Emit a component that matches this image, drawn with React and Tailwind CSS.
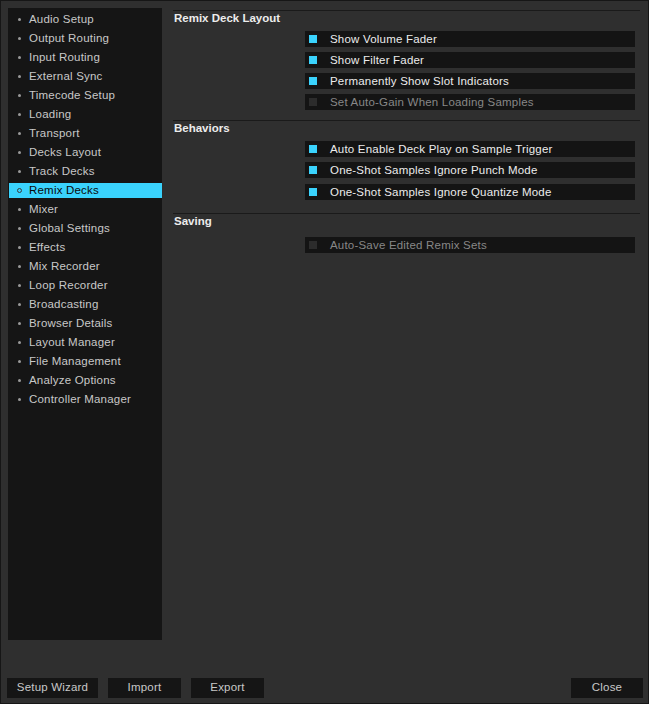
import React from "react";

const NAV = [
  "Audio Setup",
  "Output Routing",
  "Input Routing",
  "External Sync",
  "Timecode Setup",
  "Loading",
  "Transport",
  "Decks Layout",
  "Track Decks",
  "Remix Decks",
  "Mixer",
  "Global Settings",
  "Effects",
  "Mix Recorder",
  "Loop Recorder",
  "Broadcasting",
  "Browser Details",
  "Layout Manager",
  "File Management",
  "Analyze Options",
  "Controller Manager",
];

const SECTIONS = [
  {
    title: "Remix Deck Layout",
    after: "mb-[10px]",
    head: "h-[20px]",
    items: [
      { label: "Show Volume Fader", on: true },
      { label: "Show Filter Fader", on: true },
      { label: "Permanently Show Slot Indicators", on: true },
      { label: "Set Auto-Gain When Loading Samples", on: false },
    ],
  },
  {
    title: "Behaviors",
    after: "mb-[13px]",
    head: "h-[20px]",
    items: [
      { label: "Auto Enable Deck Play on Sample Trigger", on: true },
      { label: "One-Shot Samples Ignore Punch Mode", on: true },
      { label: "One-Shot Samples Ignore Quantize Mode", on: true },
    ],
  },
  {
    title: "Saving",
    after: "",
    head: "h-[23px]",
    items: [{ label: "Auto-Save Edited Remix Sets", on: false }],
  },
];

function Sidebar() {
  return (
    <div className="ml-[7px] mt-[7px] w-[154px] h-[632px] shrink-0 bg-[#151515] pt-[4px] flex flex-col gap-[4px]">
      {NAV.map((name) => {
        const active = name === "Remix Decks";
        return (
          <div
            key={name}
            className={
              "h-[15px] flex items-center ml-[1px] " +
              (active ? "bg-[#3ad3fd] text-[#0a0a0a]" : "text-[#c8c8c8]")
            }
          >
            <div className="w-[20px] flex justify-center">
              {active ? (
                <span className="w-[5px] h-[5px] rounded-full border border-[#3b3b3b]" />
              ) : (
                <span className="w-[3px] h-[3px] rounded-full bg-[#9a9a9a]" />
              )}
            </div>
            <span className="leading-[15px]">{name}</span>
          </div>
        );
      })}
    </div>
  );
}

function Row({ label, on, extra }) {
  return (
    <div
      className={
        "h-[16px] w-[330px] ml-[132px] bg-[#141414] flex items-center " +
        (extra || "")
      }
    >
      <span
        className={
          "ml-[4px] w-[8px] h-[8px] " + (on ? "bg-[#3ad3fd]" : "bg-[#2c2c2c]")
        }
      />
      <span
        className={
          "ml-[13px] leading-[16px] " +
          (on ? "text-[#ececec]" : "text-[#878787]")
        }
      >
        {label}
      </span>
    </div>
  );
}

function Section({ title, items, after, head }) {
  return (
    <div className={after}>
      <div className="h-[1px] bg-[#1a1a1a]" />
      <div className={head}>
        <div className="pl-[1px] leading-[14px] text-[#ececec] font-bold tracking-normal">
          {title}
        </div>
      </div>
      <div className="flex flex-col gap-[5px]">
        {items.map((it, i) => (
          <Row
            key={it.label}
            {...it}
            extra={i === 2 && items.length === 3 ? "mt-[1px]" : ""}
          />
        ))}
      </div>
    </div>
  );
}

function Button({ children, w }) {
  return (
    <div
      className={
        "h-[20px] bg-[#151515] text-[#c8c8c8] flex items-center justify-center " +
        w
      }
    >
      {children}
    </div>
  );
}

export default function App() {
  return (
    <div
      className="w-[649px] h-[704px] bg-[#2f2f2f] border border-[#161616] flex flex-col text-[11.5px] tracking-[0.2px]"
      style={{ fontFamily: '"Liberation Sans", Arial, sans-serif' }}
    >
      <div className="flex">
        <Sidebar />
        <div className="ml-[11px] mt-[9px] w-[467px]">
          {SECTIONS.map((s) => (
            <Section key={s.title} {...s} />
          ))}
        </div>
      </div>
      <div className="mt-[37px] flex items-center pl-[6px] pr-[5px]">
        <Button w="w-[91px]">Setup Wizard</Button>
        <div className="ml-[10px]">
          <Button w="w-[73px]">Import</Button>
        </div>
        <div className="ml-[10px]">
          <Button w="w-[73px]">Export</Button>
        </div>
        <div className="ml-auto mt-[1px]">
          <Button w="w-[72px]">Close</Button>
        </div>
      </div>
    </div>
  );
}
